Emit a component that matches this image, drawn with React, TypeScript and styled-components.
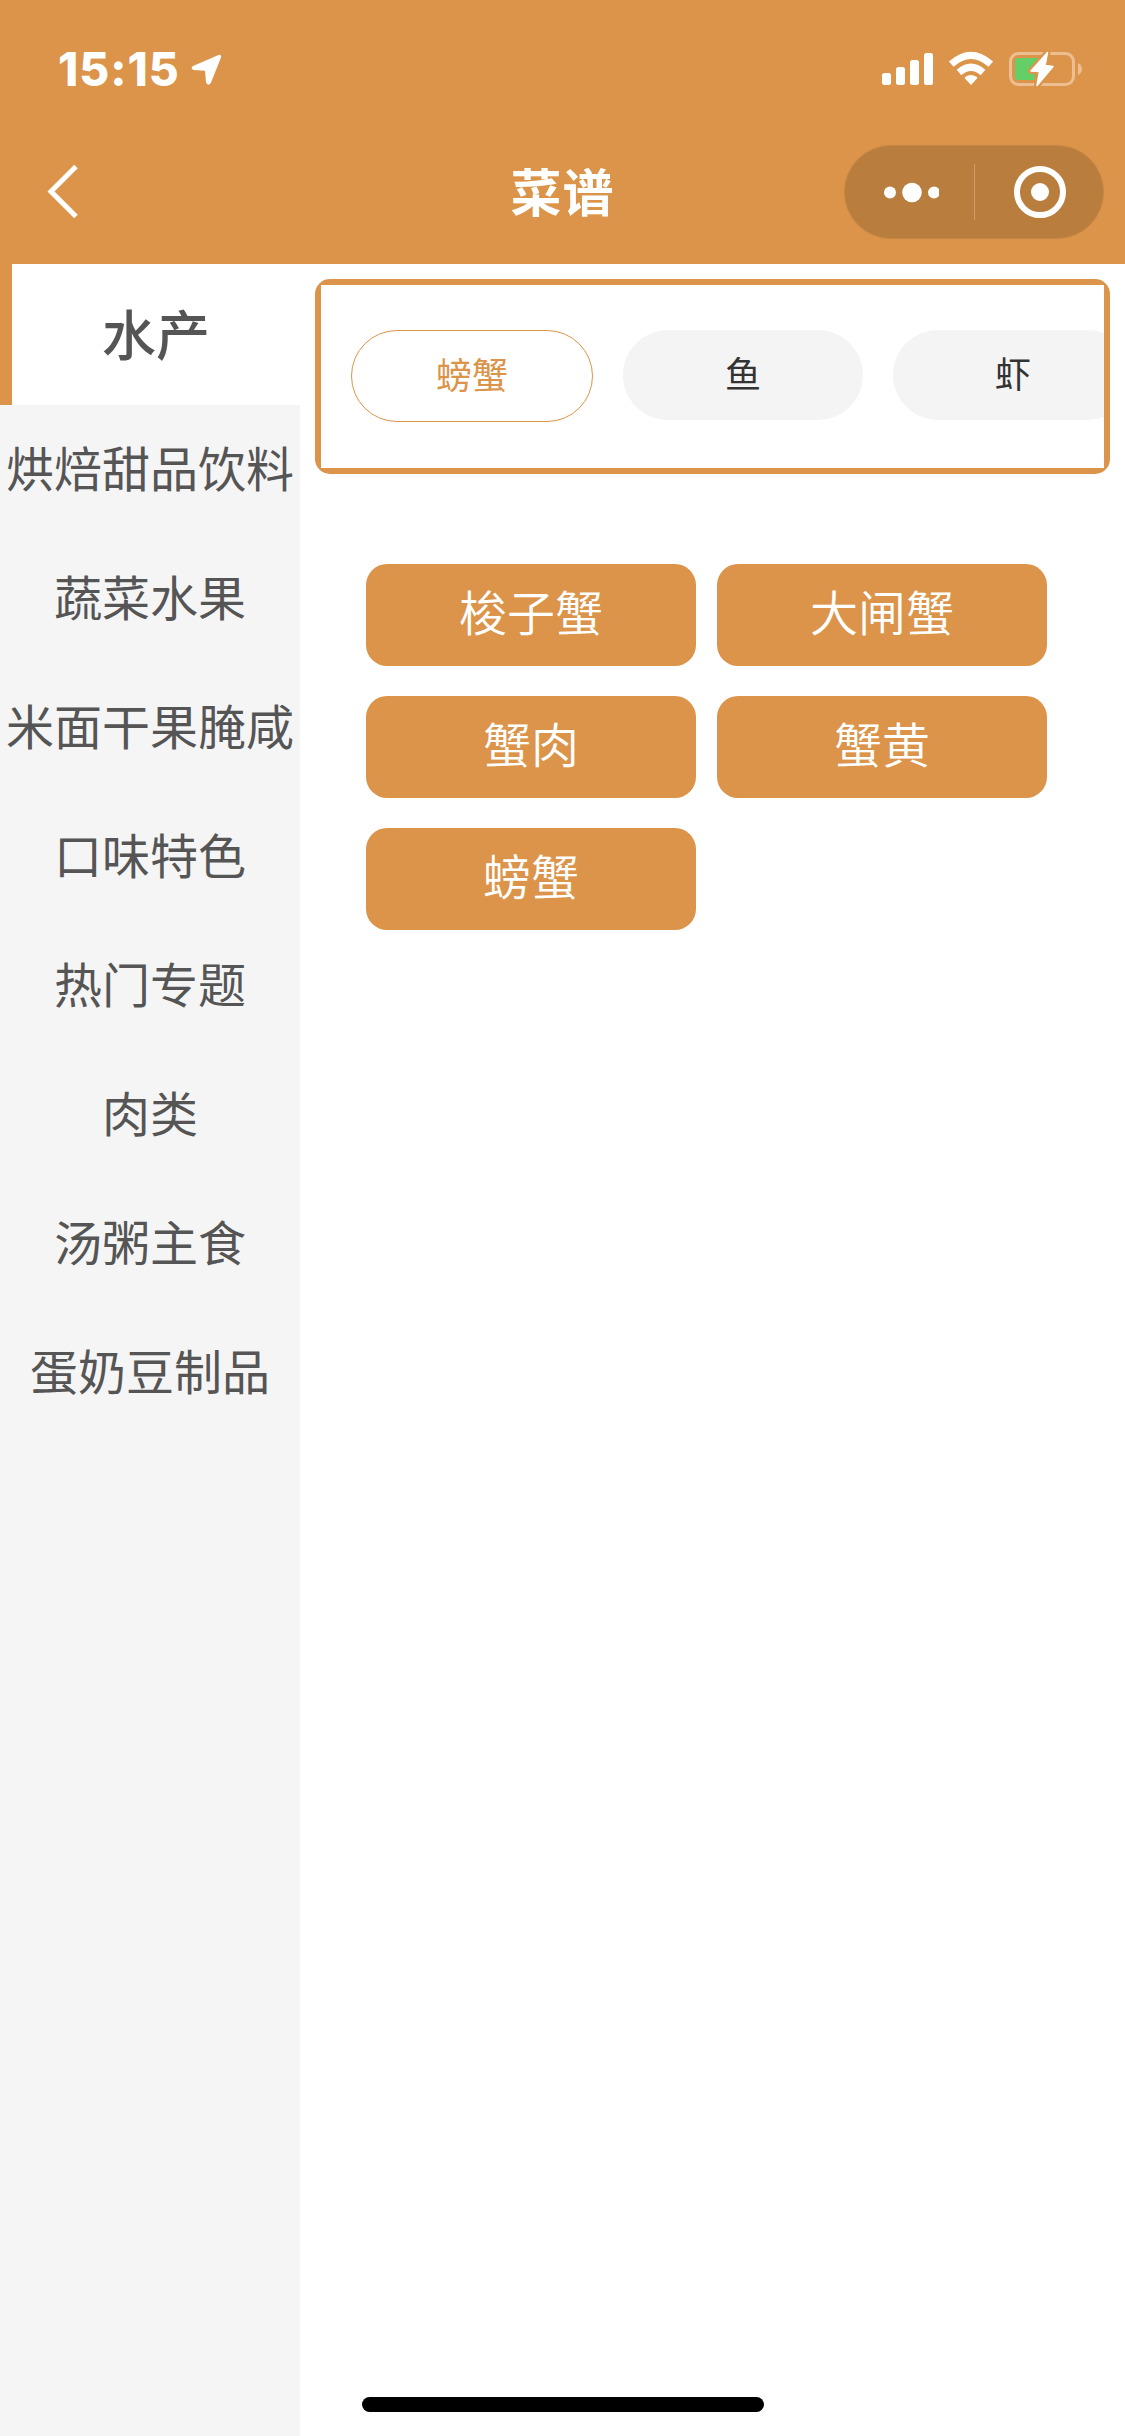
import React from "react";
import styled, { createGlobalStyle } from "styled-components";

const ORANGE = "#db944a";
const CJK = '"Noto Sans CJK SC", sans-serif';

const GlobalStyle = createGlobalStyle`
  * { box-sizing: border-box; }
  body { margin: 0; background: #fff; font-family: ${CJK}; }
`;

const Screen = styled.div`
  position: relative;
  width: 1125px;
  height: 2436px;
  display: flex;
  flex-direction: column;
  overflow: hidden;
  background: #fff;
`;

const Header = styled.header`
  height: 264px;
  flex: none;
  background: ${ORANGE};
`;

const StatusBar = styled.div`
  height: 132px;
  display: flex;
  justify-content: space-between;
  padding: 42px 41px 0 58px;
`;

const StatusLeft = styled.div`
  display: flex;
  align-items: center;
  height: 54px;
`;

const Time = styled.span`
  width: 132px;
  font: 800 46px/54px Inter, sans-serif;
  letter-spacing: 1px;
  color: #fff;
  white-space: nowrap;
`;

const StatusIcons = styled.svg`
  display: block;
  margin-top: 6px;
`;

const NavBar = styled.div`
  height: 120px;
  display: grid;
  grid-template-columns: 260px 1fr 260px;
  align-items: center;
  padding: 0 21px;
`;

const BackIcon = styled.svg`
  display: block;
  margin-left: 24px;
`;

const Title = styled.h1`
  margin: 0;
  padding-bottom: 5px;
  text-align: center;
  font: 700 51px/72px ${CJK};
  letter-spacing: 1px;
  color: #fff;
`;

const Capsule = styled.div`
  width: 260px;
  height: 94px;
  border-radius: 47px;
  background: #b97d3e;
  border: 1px solid #c58746;
  display: flex;
  align-items: center;
`;

const CapsuleButton = styled.div`
  flex: 1;
  display: flex;
  justify-content: center;
`;

const CapsuleDivider = styled.div`
  width: 1px;
  height: 56px;
  background: #cf9c69;
`;

const Body = styled.div`
  flex: 1;
  display: flex;
`;

const Sidebar = styled.nav`
  width: 300px;
  flex: none;
  background: #f5f5f5;
`;

const Category = styled.div<{ $active?: boolean }>`
  display: flex;
  justify-content: center;
  align-items: center;
  height: ${(p) => (p.$active ? 141 : 129)}px;
  padding-bottom: ${(p) => (p.$active ? 5 : 8)}px;
  border-left: ${(p) => (p.$active ? `12px solid ${ORANGE}` : "none")};
  background: ${(p) => (p.$active ? "#fff" : "transparent")};
  color: #555;
  font-size: ${(p) => (p.$active ? 54 : 48)}px;
  font-weight: ${(p) => (p.$active ? 500 : 400)};
  white-space: nowrap;
`;

const Content = styled.main`
  flex: 1;
  min-width: 0;
  padding: 15px 15px 0;
`;

const TabsFrame = styled.div`
  height: 195px;
  padding: 6px;
  border-radius: 15px;
  background: ${ORANGE};
`;

const Tabs = styled.div`
  height: 183px;
  display: flex;
  align-items: flex-start;
  gap: 30px;
  padding: 45px 30px 0;
  overflow: hidden;
  background: #fff;
`;

const Tab = styled.div<{ $active?: boolean }>`
  flex: none;
  box-sizing: content-box;
  width: 240px;
  height: 90px;
  border-radius: 46px;
  border: ${(p) => (p.$active ? `1px solid ${ORANGE}` : "none")};
  background: ${(p) => (p.$active ? "#fff" : "#f4f4f4")};
  color: ${(p) => (p.$active ? ORANGE : "#333")};
  font-size: 36px;
  line-height: 84px;
  text-align: center;
`;

const Dishes = styled.div`
  display: grid;
  grid-template-columns: 330px 330px;
  gap: 30px 21px;
  padding: 90px 0 0 51px;
`;

const Dish = styled.div`
  height: 102px;
  border-radius: 21px;
  background: ${ORANGE};
  color: #fff;
  font-size: 48px;
  font-weight: 350;
  line-height: 92px;
  text-align: center;
`;

const HomeIndicator = styled.div`
  position: absolute;
  left: 362px;
  bottom: 24px;
  width: 402px;
  height: 15px;
  border-radius: 8px;
  background: #000;
`;

const categories = [
  "水产",
  "烘焙甜品饮料",
  "蔬菜水果",
  "米面干果腌咸",
  "口味特色",
  "热门专题",
  "肉类",
  "汤粥主食",
  "蛋奶豆制品",
];
const tabs = ["螃蟹", "鱼", "虾"];
const dishes = ["梭子蟹", "大闸蟹", "蟹肉", "蟹黄", "螃蟹"];

const LocationArrow = () => (
  <svg width="32" height="34" viewBox="190 51 32 34">
    <path
      d="M218.500 54 L193 65 Q190 67.500 193.500 69 L205 69.800 L206 81.500 Q208 85.500 210.800 82 L221 56.500 Q221.800 53 218.500 54Z"
      fill="#fff"
    />
  </svg>
);

const DeviceStatus = () => (
  <StatusIcons width="206" height="44" viewBox="878 48 206 44">
    <g fill="#fff">
      <rect x="882" y="73" width="9" height="12" rx="2.500" />
      <rect x="896" y="67" width="9" height="18" rx="2.500" />
      <rect x="910" y="60" width="9" height="25" rx="2.500" />
      <rect x="924" y="53" width="9" height="32" rx="2.500" />
      <path d="M971 85 L964.800 78.300 Q964.400 77.500 965.200 77 Q971 73 976.800 77 Q977.600 77.500 977.200 78.300Z" />
    </g>
    <g fill="none" stroke="#fff" strokeWidth="7">
      <path d="M951.200 64.200 Q971 46.500 990.800 64.200" />
      <path d="M959 72.500 Q971 62 983 72.500" />
    </g>
    <rect x="1010.500" y="53.500" width="63" height="31" rx="8" fill="none" stroke="#ecbe91" strokeWidth="3" />
    <path d="M1078 63 Q1082 65 1082 69 Q1082 73 1078 75Z" fill="#ecbe91" />
    <rect x="1015" y="58" width="24" height="22" rx="3" fill="#64cf67" />
    <path
      d="M1047.500 52.500 L1031 71 L1038.500 71.500 L1037 85.500 L1052.500 67 L1045 65.500Z"
      fill={ORANGE}
      stroke={ORANGE}
      strokeWidth="6"
      strokeLinejoin="round"
    />
    <path
      d="M1047.500 52.500 L1031 71 L1039.500 71.500 L1037 85.500 L1053 66.500 L1045 65.500Z"
      fill="#fff"
      stroke="#fff"
      strokeWidth="1.500"
      strokeLinejoin="round"
    />
  </StatusIcons>
);

export default function App() {
  return (
    <>
      <GlobalStyle />
      <Screen>
        <Header>
          <StatusBar>
            <StatusLeft>
              <Time>15:15</Time>
              <LocationArrow />
            </StatusLeft>
            <DeviceStatus />
          </StatusBar>
          <NavBar>
            <BackIcon width="36" height="60" viewBox="45 162 36 60" fill="none" stroke="#fff" strokeWidth="5">
              <path d="M76 166.500 L51 191.500 L76 216.500" />
            </BackIcon>
            <Title>菜谱</Title>
            <Capsule>
              <CapsuleButton>
                <svg width="60" height="24" viewBox="879 180 60 24" fill="#fff">
                  <circle cx="890" cy="192.500" r="6" />
                  <circle cx="912" cy="192.500" r="9.800" />
                  <circle cx="934" cy="192.500" r="6" />
                </svg>
              </CapsuleButton>
              <CapsuleDivider />
              <CapsuleButton>
                <svg width="54" height="54" viewBox="-1 0 54 54">
                  <circle cx="27" cy="27" r="23" fill="none" stroke="#fff" strokeWidth="6" />
                  <circle cx="27" cy="27" r="9" fill="#fff" />
                </svg>
              </CapsuleButton>
            </Capsule>
          </NavBar>
        </Header>
        <Body>
          <Sidebar>
            {categories.map((name, i) => (
              <Category key={name} $active={i === 0}>
                {name}
              </Category>
            ))}
          </Sidebar>
          <Content>
            <TabsFrame>
              <Tabs>
                {tabs.map((name, i) => (
                  <Tab key={name} $active={i === 0}>
                    {name}
                  </Tab>
                ))}
              </Tabs>
            </TabsFrame>
            <Dishes>
              {dishes.map((name) => (
                <Dish key={name}>{name}</Dish>
              ))}
            </Dishes>
          </Content>
        </Body>
        <HomeIndicator />
      </Screen>
    </>
  );
}
